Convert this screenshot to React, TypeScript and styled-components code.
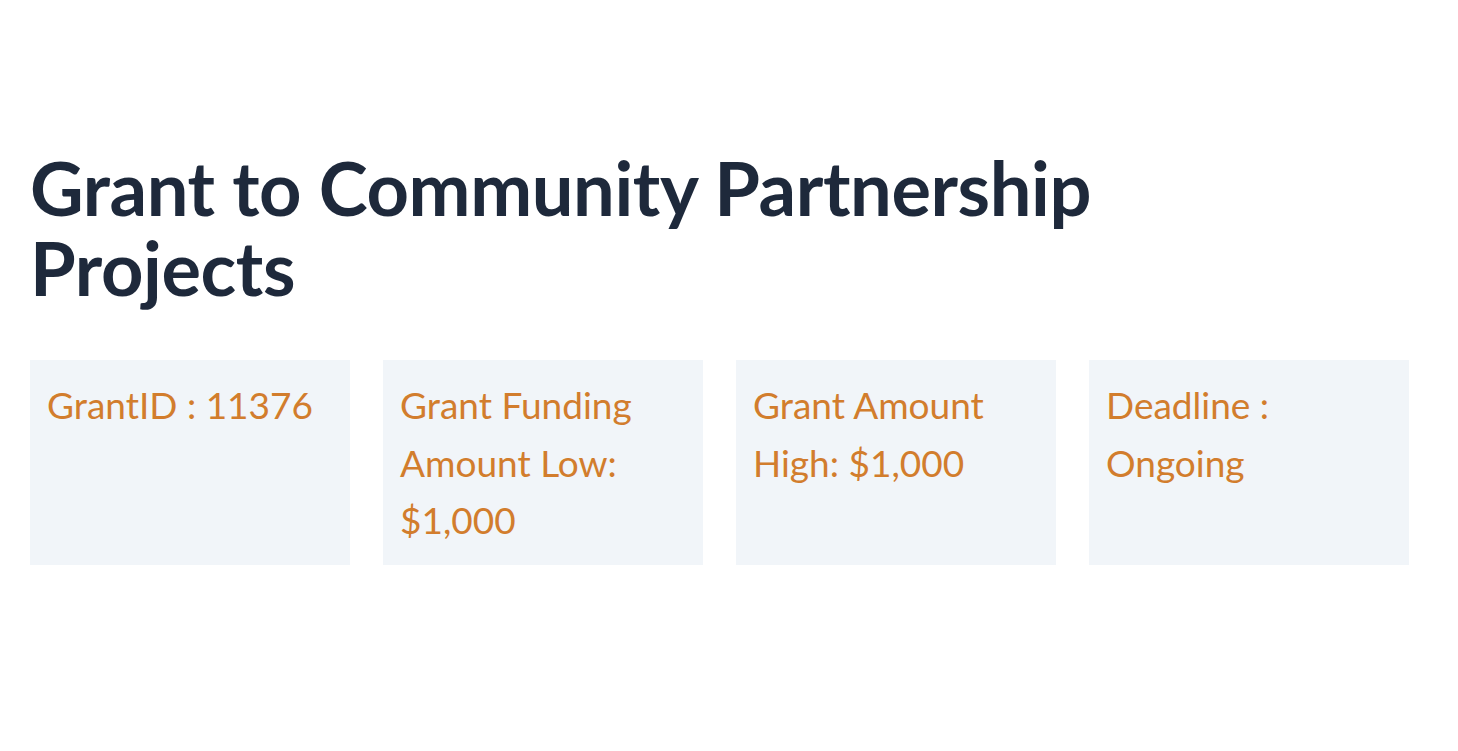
import React from "react";
import styled, { createGlobalStyle } from "styled-components";

const Global = createGlobalStyle`
  html, body { margin: 0; padding: 0; background: #ffffff; }
  body { font-family: Lato, "Noto Sans", sans-serif; }
`;

const Page = styled.main`
  padding: 148px 0 0 30px;
  display: flex;
  flex-direction: column;
  gap: 52px;
`;

const Title = styled.h1`
  margin: 0;
  max-width: 1100px;
  font-family: Lato, "Noto Sans", sans-serif;
  font-size: 74px;
  line-height: 80px;
  font-weight: 700;
  color: #1e293b;
  letter-spacing: -0.4px;
`;

const Grid = styled.section`
  display: grid;
  grid-template-columns: repeat(4, 320px);
  column-gap: 33px;
  align-items: stretch;
`;

const Card = styled.div`
  background: #f1f5f9;
  padding: 16px 17px;
  font-size: 37px;
  line-height: 57.6px;
  color: #d27d2d;
`;

const items = [
  "GrantID : 11376",
  "Grant Funding Amount Low: $1,000",
  "Grant Amount High: $1,000",
  "Deadline : Ongoing",
];

export default function App() {
  return (
    <>
      <Global />
      <Page>
        <Title>Grant to Community Partnership Projects</Title>
        <Grid>
          {items.map((t) => (
            <Card key={t}>{t}</Card>
          ))}
        </Grid>
      </Page>
    </>
  );
}
